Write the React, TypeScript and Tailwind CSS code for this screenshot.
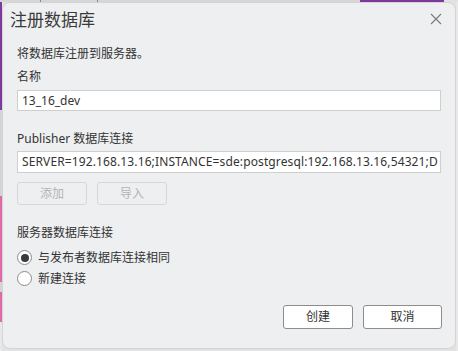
import React from "react";

const font = "font-['Segoe_UI','Noto_Sans','Noto_Sans_CJK_SC',sans-serif]";

function Radio({ checked, label }: { checked?: boolean; label: string }) {
  return (
    <div className="flex items-center h-[21px]">
      <div className="w-[15px] h-[15px] rounded-full border border-[#8c8c8c] bg-white flex items-center justify-center">
        {checked && <div className="w-[8px] h-[8px] rounded-full bg-[#3a3a3a]" />}
      </div>
      <span className="ml-[6px] text-[12px] text-[#333]">{label}</span>
    </div>
  );
}

export default function App() {
  return (
    <div className={`w-[458px] h-[351px] bg-[#e2e2e2] flex flex-col overflow-hidden ${font}`}>
      <div className="h-[2px] flex shrink-0">
        <div className="w-[40px] bg-[#d6d6d6]" />
        <div className="w-[1px] bg-[#888]" />
        <div className="w-[56px] bg-[#d6d6d6]" />
        <div className="w-[1px] bg-[#888]" />
        <div className="w-[262px] bg-[#d6d6d6]" />
        <div className="w-[84px] bg-[#7d3a9c]" />
        <div className="flex-1 bg-[#e2e2e2]" />
      </div>
      <div className="flex flex-1 min-h-0">
        <div className="w-[2px] flex flex-col shrink-0">
          <div className="h-[108px] bg-[#7d3a9c]" />
          <div className="h-[86px] bg-[#d4d4d4]" />
          <div className="h-[86px] bg-[#e06aa8]" />
          <div className="h-[10px] bg-[#d4d4d4]" />
          <div className="h-[30px] bg-[#e06aa8]" />
          <div className="flex-1 bg-[#e8e8e8]" />
        </div>
        <div className="w-[454px] h-[347px] bg-[#eeeff1] rounded-[8px] border border-[#d4d4d6] flex flex-col text-[#333]">
          <div className="flex items-center justify-between h-[33px] pl-[7px] pr-[13px]">
            <span className="text-[17px] text-[#3a3a3a] leading-none">注册数据库</span>
            <svg width="12" height="12" viewBox="0 0 12 12" className="mt-[-1px]">
              <path d="M1 1L11 11M11 1L1 11" stroke="#7a7a7a" strokeWidth="1.1" />
            </svg>
          </div>
          <div className="flex flex-col px-[14px]">
            <div className="text-[12px] mt-[9px] leading-[18px]">将数据库注册到服务器。</div>
            <div className="text-[12px] mt-[5px] leading-[18px]">名称</div>
            <div className="mt-[4px] h-[21px] bg-white border border-[#cfcfcf] flex items-center px-[4px] text-[12px] overflow-hidden whitespace-nowrap">
              13_16_dev
            </div>
            <div className="text-[12px] mt-[19px] leading-[18px]">Publisher 数据库连接</div>
            <div className="mt-[3px] h-[22px] bg-white border border-[#cfcfcf] flex items-center pl-[4px] text-[12px] tracking-[0.12px] overflow-hidden whitespace-nowrap">
              SERVER=192.168.13.16;INSTANCE=sde:postgresql:192.168.13.16,54321;D
            </div>
            <div className="flex gap-[10px] mt-[9px]">
              <div className="w-[70px] h-[23px] rounded-[3px] border border-[#d6d6d6] flex items-center justify-center text-[12px] text-[#b4b4b4]">添加</div>
              <div className="w-[70px] h-[23px] rounded-[3px] border border-[#d6d6d6] flex items-center justify-center text-[12px] text-[#b4b4b4]">导入</div>
            </div>
            <div className="text-[12px] mt-[19px] leading-[18px]">服务器数据库连接</div>
            <div className="mt-[5px] flex flex-col">
              <Radio checked label="与发布者数据库连接相同" />
              <Radio label="新建连接" />
            </div>
          </div>
          <div className="flex justify-end gap-[10px] px-[13px] mt-[16px]">
            <div className="w-[70px] h-[24px] rounded-[3px] border border-[#8c8c8c] bg-white flex items-center justify-center text-[12px]">创建</div>
            <div className="w-[79px] h-[24px] rounded-[3px] border border-[#8c8c8c] bg-white flex items-center justify-center text-[12px]">取消</div>
          </div>
        </div>
        <div className="flex-1 bg-[#e8e8e8]" />
      </div>
    </div>
  );
}
